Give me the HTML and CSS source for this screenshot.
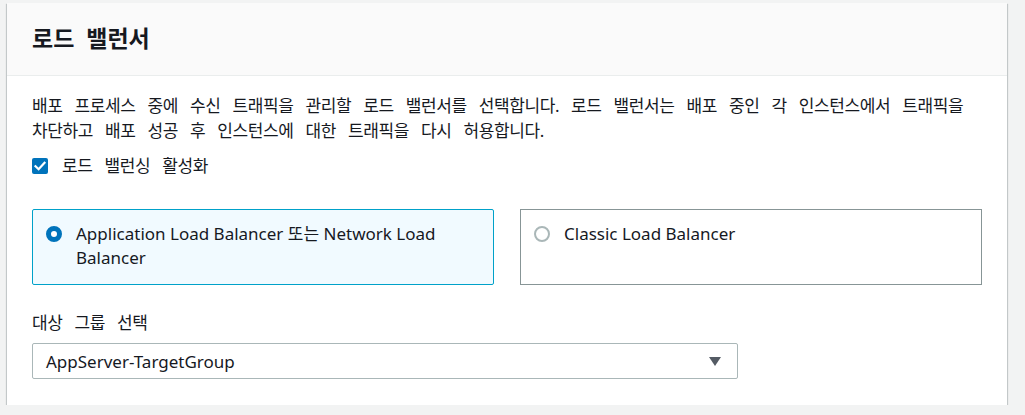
FILE: index.html
```html
<!DOCTYPE html>
<html lang="ko">
<head>
<meta charset="utf-8">
<link rel="stylesheet" href="styles.css">
</head>
<body>
<div class="page">
  <section class="card">
    <header class="card-header">
      <h2 class="title">로드 밸런서</h2>
    </header>
    <div class="card-body">
      <p class="desc ko">배포 프로세스 중에 수신 트래픽을 관리할 로드 밸런서를 선택합니다. 로드 밸런서는 배포 중인 각 인스턴스에서 트래픽을 차단하고 배포 성공 후 인스턴스에 대한 트래픽을 다시 허용합니다.</p>
      <label class="check-row">
        <span class="checkbox">
          <svg width="16" height="16" viewBox="0 0 16 16"><path d="M3.5 8.2 L6.6 11.2 L12.5 4.8" fill="none" stroke="#fff" stroke-width="2.2" stroke-linecap="square"/></svg>
        </span>
        <span class="check-label ko">로드 밸런싱 활성화</span>
      </label>
      <div class="tiles">
        <div class="tile selected">
          <span class="radio on"></span>
          <span class="tile-label">Application Load Balancer 또는 Network Load Balancer</span>
        </div>
        <div class="tile">
          <span class="radio"></span>
          <span class="tile-label">Classic Load Balancer</span>
        </div>
      </div>
      <div class="field-label ko">대상 그룹 선택</div>
      <div class="select">
        <span class="select-value">AppServer-TargetGroup</span>
        <svg class="caret" width="12" height="9" viewBox="0 0 12 9"><path d="M0 0 H12 L6 9 Z" fill="#545b64"/></svg>
      </div>
    </div>
  </section>
</div>
</body>
</html>
```

FILE: styles.css
```css
* { box-sizing: border-box; }
html, body { margin: 0; padding: 0; }
body {
  background: #f2f3f3;
  font-family: "Noto Sans", "Noto Sans CJK KR", sans-serif;
  color: #16191f;
  font-size: 17px;
  line-height: 25px;
}
.ko {
  letter-spacing: -0.4px;
  word-spacing: 8px;
}
.page {
  padding: 3px 0 0 7px;
}
.card {
  width: 1000px;
  background: #fff;
  box-shadow: 0 1px 1px 0 rgba(0,28,36,.3), 1px 1px 1px 0 rgba(0,28,36,.15), -1px 1px 1px 0 rgba(0,28,36,.15);
}
.card-header {
  height: 73px;
  background: #fafafa;
  border-bottom: 1px solid #eaeded;
  padding: 0 25px;
  display: flex;
  align-items: center;
}
.title {
  margin: 0 0 3px;
  font-size: 23px;
  font-weight: 700;
  line-height: 30px;
  word-spacing: 6px;
}
.card-body {
  padding: 17px 25px 26px;
}
.desc {
  margin: 0;
}
.check-row {
  display: flex;
  align-items: center;
  gap: 14px;
  margin-top: 10px;
}
.checkbox {
  width: 16px;
  height: 16px;
  border-radius: 2px;
  background: #0073bb;
  display: block;
}
.checkbox svg { display: block; }
.tiles {
  display: grid;
  grid-template-columns: 1fr 1fr;
  gap: 26px;
  margin-top: 31px;
}
.tile {
  border: 1px solid #879596;
  padding: 12px 13px 14px;
  display: flex;
  align-items: flex-start;
  gap: 14px;
  min-height: 76px;
  line-height: 24px;
}
.tile.selected {
  border-color: #00a1c9;
  background: #f1faff;
  border-radius: 2px;
}
.radio {
  flex: none;
  width: 16px;
  height: 16px;
  border-radius: 50%;
  border: 2px solid #aab7b8;
  margin-top: 4px;
  background: #fff;
}
.radio.on {
  border: 5px solid #0073bb;
}
.field-label {
  margin-top: 25px;
}
.select {
  margin-top: 8px;
  width: 706px;
  height: 36px;
  border: 1px solid #aab7b8;
  border-radius: 2px;
  display: flex;
  align-items: center;
  justify-content: space-between;
  padding: 0 16px 0 13px;
}
.caret { display: block; }
```
